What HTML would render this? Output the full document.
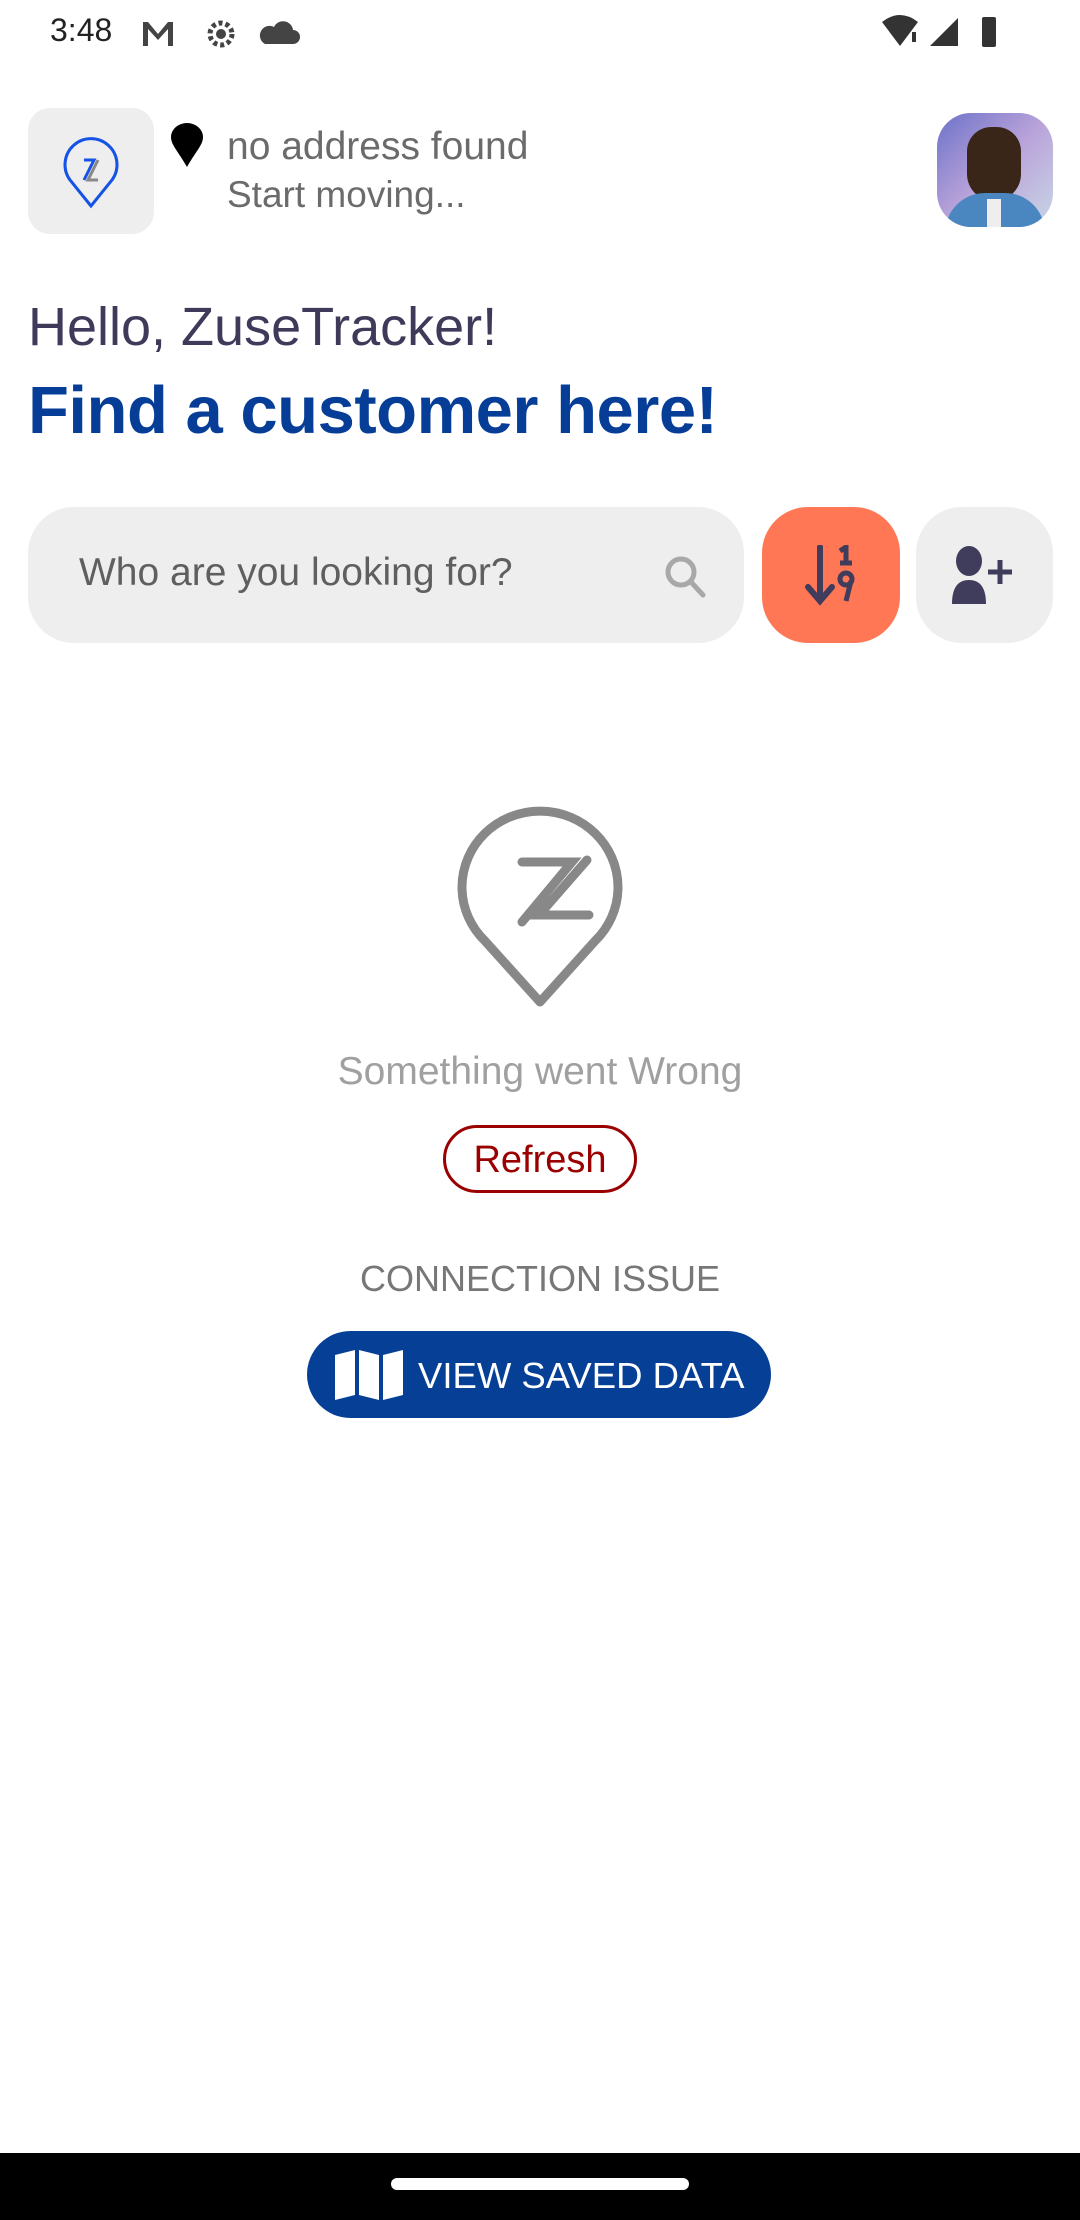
<!DOCTYPE html>
<html><head><meta charset="utf-8"><style>
*{margin:0;padding:0;box-sizing:border-box}
body{width:1080px;height:2220px;background:#fff;position:relative;overflow:hidden;font-family:"Liberation Sans",sans-serif}
.a{position:absolute}
</style></head><body>
<!-- status bar -->
<div class="a" style="left:50px;top:12px;font-size:32px;color:#222">3:48</div>
<svg class="a" style="left:140px;top:16px" width="160" height="36" viewBox="0 0 160 36">
<path d="M3 6h5l10 12 10-12h5v24h-5V13l-10 11-10-11v17H3z" fill="#444"/>
<circle cx="81" cy="18" r="11" fill="none" stroke="#444" stroke-width="5" stroke-dasharray="4 3"/><circle cx="81" cy="18" r="5" fill="#444"/>
<path d="M125 28h28a7 7 0 0 0 0-14 10 10 0 0 0-19-3 8 8 0 0 0-9 17z" fill="#444"/>
</svg>
<svg class="a" style="left:880px;top:14px" width="130" height="36" viewBox="0 0 130 36">
<path d="M2 8q18-14 36 0L20 32z" fill="#333"/><rect x="32" y="18" width="4" height="10" fill="#333"/>
<path d="M50 32L78 4v28z" fill="#333"/>
<rect x="102" y="3" width="14" height="30" rx="2" fill="#333"/>
</svg>
<!-- header -->
<div class="a" style="left:28px;top:108px;width:126px;height:126px;border-radius:22px;background:#eeeeee"></div>
<svg class="a" style="left:60px;top:134px" width="62" height="76" viewBox="0 0 62 76">
<path d="M31 72L10 46A26 26 0 1 1 52 46z" fill="none" stroke="#1553e6" stroke-width="3"/>
<path d="M24 26h10L24 46" fill="none" stroke="#1553e6" stroke-width="3"/>
<path d="M38 26L28 46h10" fill="none" stroke="#888" stroke-width="3"/>
</svg>
<svg class="a" style="left:170px;top:123px" width="34" height="44" viewBox="0 0 34 44"><path d="M17 44C8 28 1 22 1 14A16 14 0 0 1 33 14c0 8-7 14-16 30z" fill="#000"/></svg>
<div class="a" style="left:227px;top:125px;font-size:39px;color:#6b6b6b">no address found</div>
<div class="a" style="left:227px;top:174px;font-size:37px;color:#6b6b6b">Start moving...</div>
<div class="a" style="left:937px;top:113px;width:116px;height:114px;border-radius:34px;overflow:hidden;background:linear-gradient(135deg,#6d72c9,#b9a3d9 50%,#c9d6e6)">
<div class="a" style="left:30px;top:14px;width:54px;height:74px;border-radius:27px 27px 30px 30px;background:#3a2619"></div>
<div class="a" style="left:8px;top:80px;width:100px;height:50px;border-radius:40px 40px 0 0;background:#4a86c0"></div>
<div class="a" style="left:50px;top:86px;width:14px;height:30px;background:#eee"></div>
</div>
<div class="a" style="left:28px;top:296px;font-size:54px;color:#3f3a5a">Hello, ZuseTracker!</div>
<div class="a" style="left:28px;top:372px;font-size:67px;font-weight:bold;color:#063d96;letter-spacing:-0.5px">Find a customer here!</div>
<!-- search row -->
<div class="a" style="left:28px;top:507px;width:716px;height:136px;border-radius:46px;background:#eeeeee"></div>
<div class="a" style="left:79px;top:551px;font-size:39px;color:#5f5f5f">Who are you looking for?</div>
<svg class="a" style="left:662px;top:553px" width="46" height="46" viewBox="0 0 46 46"><circle cx="19" cy="19" r="13" fill="none" stroke="#a8a8a8" stroke-width="5"/><path d="M29 29l12 13" stroke="#a8a8a8" stroke-width="5" stroke-linecap="round"/></svg>
<div class="a" style="left:762px;top:507px;width:138px;height:136px;border-radius:46px;background:#ff7755"></div>
<svg class="a" style="left:800px;top:545px" width="66" height="62" viewBox="0 0 66 62">
<path d="M20 2v52M8 42l12 14 12-14" fill="none" stroke="#403c5c" stroke-width="6" stroke-linecap="round"/>
<path d="M40 6l6-4v16M40 18h12" fill="none" stroke="#403c5c" stroke-width="5"/>
<circle cx="46" cy="34" r="6" fill="none" stroke="#403c5c" stroke-width="5"/><path d="M51 36l-5 20" stroke="#403c5c" stroke-width="5"/>
</svg>
<div class="a" style="left:916px;top:507px;width:137px;height:136px;border-radius:46px;background:#eeeeee"></div>
<svg class="a" style="left:950px;top:544px" width="70" height="62" viewBox="0 0 70 62">
<ellipse cx="19" cy="17" rx="13" ry="15" fill="#403c5c"/><path d="M2 60q0-24 17-24t17 24z" fill="#403c5c"/>
<path d="M50 16v24M38 28h24" stroke="#403c5c" stroke-width="5"/>
</svg>
<!-- error -->
<svg class="a" style="left:456px;top:800px" width="168" height="214" viewBox="0 0 168 214">
<path d="M84 202L29 141A78 76 0 1 1 139 141z" fill="none" stroke="#888" stroke-width="9" stroke-linejoin="round"/>
<path d="M66 62h50l-50 60M131 60l-48 55h50" fill="none" stroke="#888" stroke-width="9" stroke-linecap="round"/>
</svg>
<div class="a" style="left:0;width:1080px;text-align:center;top:1050px;font-size:39px;color:#a0a0a0">Something went Wrong</div>
<div class="a" style="left:443px;top:1125px;width:194px;height:68px;border:3px solid #9b0000;border-radius:34px;text-align:center;line-height:64px;font-size:38px;color:#9b0000">Refresh</div>
<div class="a" style="left:0;width:1080px;text-align:center;top:1258px;font-size:36px;color:#777">CONNECTION ISSUE</div>
<div class="a" style="left:307px;top:1331px;width:464px;height:87px;border-radius:44px;background:#063f96"></div>
<svg class="a" style="left:335px;top:1349px" width="68" height="52" viewBox="0 0 68 52"><path d="M0 6l20-5v45L0 51zM24 1l20 5v45l-20-5zM48 6l20-5v45l-20 5z" fill="#fff"/></svg>
<div class="a" style="left:418px;top:1355px;font-size:36.5px;color:#fff">VIEW SAVED DATA</div>
<!-- nav -->
<div class="a" style="left:0;top:2153px;width:1080px;height:67px;background:#000"></div>
<div class="a" style="left:391px;top:2178px;width:298px;height:12px;border-radius:6px;background:#fff"></div>
</body></html>
